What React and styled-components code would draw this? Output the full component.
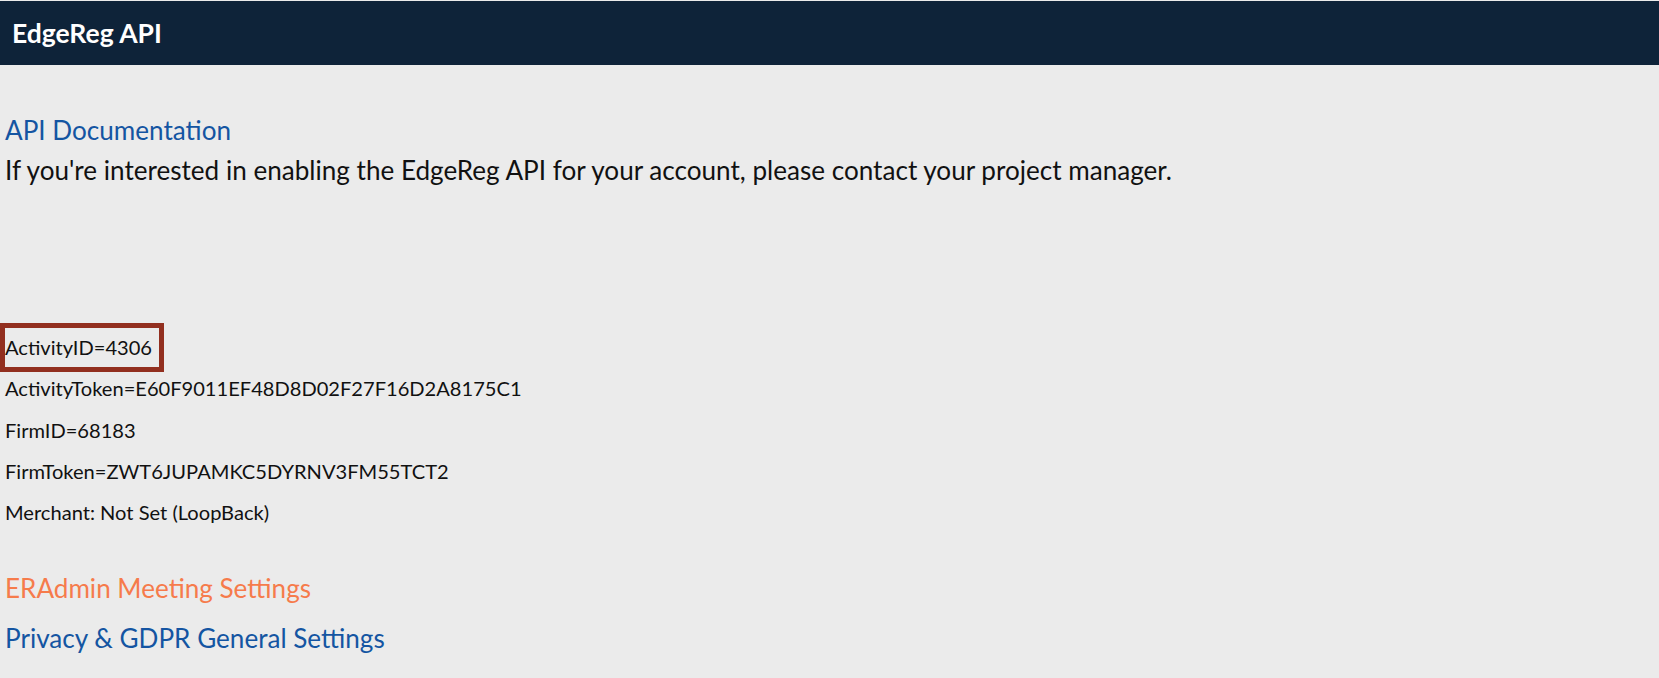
import React from "react";
import styled, { createGlobalStyle } from "styled-components";

const Global = createGlobalStyle`
  html, body {
    margin: 0;
    padding: 0;
    background: #ebebeb;
  }
  body {
    font-family: Lato, "Open Sans", "Liberation Sans", sans-serif;
    color: #111;
  }
`;

const Page = styled.div`
  min-height: 678px;
  padding-top: 1px;
  background: #ebebeb;
`;

const Header = styled.header`
  height: 64px;
  background: #0e2339;
  padding-left: 12px;
  display: flex;
  align-items: center;
`;

const Title = styled.h1`
  margin: 0;
  font-size: 26.5px;
  font-weight: 700;
  line-height: 64px;
  color: #ffffff;
`;

const Main = styled.main`
  padding: 45px 5px 0;
`;

const Link = styled.a`
  display: block;
  width: fit-content;
  font-size: 26.1px;
  line-height: ${(p) => p.$lh || 40}px;
  color: ${(p) => (p.$accent ? "#f67b4b" : "#1455a2")};
  text-decoration: none;
  cursor: pointer;
`;

const Intro = styled.p`
  margin: 0;
  font-size: 26.1px;
  line-height: 40px;
  color: #111;
`;

const Details = styled.div`
  margin-top: 137px;
  margin-bottom: 30px;
  display: flex;
  flex-direction: column;
`;

const Row = styled.div`
  font-size: 20.1px;
  line-height: 41.3px;
  height: 41.3px;
  color: #111;
`;

const Marked = styled.span`
  display: inline-block;
  line-height: 39px;
  padding-right: 7px;
  outline: 5px solid #922f1f;
`;

const rows = [
  "ActivityToken=E60F9011EF48D8D02F27F16D2A8175C1",
  "FirmID=68183",
  "FirmToken=ZWT6JUPAMKC5DYRNV3FM55TCT2",
  "Merchant: Not Set (LoopBack)",
];

export default function App() {
  return (
    <Page>
      <Global />
      <Header>
        <Title>EdgeReg API</Title>
      </Header>
      <Main>
        <Link>API Documentation</Link>
        <Intro>
          If you're interested in enabling the EdgeReg API for your account, please contact your project manager.
        </Intro>
        <Details>
          <Row>
            <Marked>ActivityID=4306</Marked>
          </Row>
          {rows.map((r) => (
            <Row key={r}>{r}</Row>
          ))}
        </Details>
        <Link $accent $lh={50}>ERAdmin Meeting Settings</Link>
        <Link $lh={50}>Privacy &amp; GDPR General Settings</Link>
      </Main>
    </Page>
  );
}
